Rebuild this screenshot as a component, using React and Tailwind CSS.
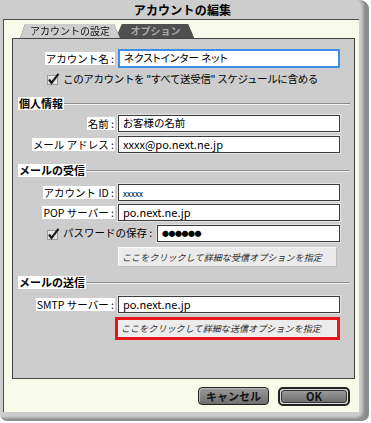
import React from "react";

const jp = "font-['Noto_Sans_CJK_JP',sans-serif]";

// right-aligned label with the white highlight behind it
const Label = ({ children }) => (
  <div className="w-[102px] flex justify-end shrink-0">
    <span className="bg-white px-[1px] leading-[13px]">{children}</span>
  </div>
);

const Field = ({ label, value, focus, jpText }) => (
  <div className="flex items-center">
    <Label>{label}</Label>
    <div
      className={`ml-[3px] w-[222px] bg-white flex items-center pl-[4px] ${
        focus
          ? "h-[19px] border-2 border-[#3d8fe6]"
          : "h-[17px] border border-[#3a3a3a] shadow-[0_0_0_1px_#e4e4e4]"
      }`}
    >
      <span
        className={`leading-none text-black ${
          jpText ? "text-[10.5px] [font-feature-settings:'palt']" : "text-[11px]"
        }`}
      >
        {value}
      </span>
    </div>
  </div>
);

const Check = () => (
  <svg width="13" height="12" viewBox="0 0 13 12" className="shrink-0">
    <rect x="0.5" y="2.5" width="10" height="9" fill="#e6e6e6" stroke="#9a9a9a" />
    <path d="M2 6.5 L4.5 10 L11.5 0.8" fill="none" stroke="#1a1a1a" strokeWidth="2.2" />
  </svg>
);

const Section = ({ title }) => (
  <div className="flex items-center pl-[5px] pr-[4px] h-[13px]">
    <span className="bg-white font-bold text-[11px] leading-[13px] px-[1px] text-black">{title}</span>
    <div className="flex-1 border-t border-[#8c8c8c] border-b border-b-[#f2f2f2]" />
  </div>
);

const OptionButton = ({ children, red }) => (
  <div className={`flex ${red ? "ml-[102px]" : "ml-[105px]"}`}>
    <div
      className={
        red
          ? "w-[225px] h-[23px] border-[3px] border-[#e8141a] bg-[#ececec] flex items-center pl-[3px]"
          : "w-[219px] h-[20px] border border-[#bdbdbd] border-t-[#f8f8f8] border-l-[#f8f8f8] bg-[#ebebeb] flex items-center pl-[3px]"
      }
    >
      <span className="italic text-[9px] whitespace-nowrap text-[#2a2a2a] leading-none tracking-[0.1px]">
        {children}
      </span>
    </div>
  </div>
);

export default function App() {
  return (
    <div className={`w-[371px] h-[423px] bg-white ${jp} text-[10.5px] text-black`}>
      <div className="w-[369px] h-[421px] bg-[#cdcdcd] rounded-tr-[9px] rounded-b-[7px] shadow-[inset_-6px_-3px_3px_rgba(0,0,0,0.32)] flex flex-col">
        {/* title bar */}
        <div className="h-[19px] flex items-center justify-center pr-[4px]">
          <span className="font-bold text-[12px] leading-none tracking-[0.2px]">アカウントの編集</span>
        </div>

        <div className="ml-[3px] w-[356px] h-[393px] border-t border-l border-[#4d4d4d] bg-[#f8fbe9] pl-[8px] pt-[4px] flex flex-col">
          {/* tabs */}
          <div className="flex h-[14px] items-end pl-[8px]">
            <div className="z-10 [filter:drop-shadow(0_0_0.6px_#333)]">
              <div className="w-[100px] h-[14px] bg-[#cdcdcd] [clip-path:polygon(5px_0,calc(100%-6px)_0,100%_100%,0_100%)] flex items-center justify-center">
                <span className="text-[10px] leading-none text-[#111]">アカウントの設定</span>
              </div>
            </div>
            <div className="-ml-[4px] [filter:drop-shadow(0_0_0.6px_#222)]">
              <div className="w-[78px] h-[14px] bg-[#4f4f4f] [clip-path:polygon(6px_0,calc(100%-6px)_0,100%_100%,0_100%)] flex items-center justify-center pl-[1px]">
                <span className="text-[10px] font-bold leading-none text-[#a9a9a9]">オプション</span>
              </div>
            </div>
          </div>

          {/* panel */}
          <div className="w-[343px] h-[341px] border border-[#444] bg-[#cdcdcd] flex flex-col">
            <div className="mt-[10px]">
              <Field label="アカウント名 :" value="ネクストインター ネット" focus jpText />
            </div>
            <div className="mt-[4px] h-[14px] flex items-center pl-[34px] gap-[3px]">
              <Check />
              <span className="leading-none tracking-[-0.35px]">
                このアカウントを "すべて送受信" スケジュールに含める
              </span>
            </div>

            <div className="mt-[11px]">
              <Section title="個人情報" />
            </div>
            <div className="mt-[5px]">
              <Field label="名前 :" value="お客様の名前" jpText />
            </div>
            <div className="mt-[4px]">
              <Field label="メール アドレス :" value="xxxx@po.next.ne.jp" />
            </div>

            <div className="mt-[11px]">
              <Section title="メールの受信" />
            </div>
            <div className="mt-[7px]">
              <Field label="アカウント ID :" value={<span className="text-[8px]">xxxxx</span>} />
            </div>
            <div className="mt-[3px]">
              <Field label="POP サーバー :" value="po.next.ne.jp" />
            </div>
            <div className="mt-[4px] flex items-center pl-[34px]">
              <Check />
              <span className="ml-[3px] w-[94px] leading-none">パスワードの保存 :</span>
              <div className="w-[183px] h-[17px] bg-white border border-[#3a3a3a] shadow-[0_0_0_1px_#e4e4e4] flex items-center pl-[4px]">
                <span className="text-[7px] leading-none tracking-[-0.5px] text-black">●●●●●●</span>
              </div>
            </div>
            <div className="mt-[5px]">
              <OptionButton>ここをクリックして詳細な受信オプションを指定</OptionButton>
            </div>

            <div className="mt-[9px]">
              <Section title="メールの送信" />
            </div>
            <div className="mt-[7px]">
              <Field label="SMTP サーバー :" value="po.next.ne.jp" />
            </div>
            <div className="mt-[4px]">
              <OptionButton red>ここをクリックして詳細な送信オプションを指定</OptionButton>
            </div>
          </div>

          {/* buttons */}
          <div className="mt-[8px] flex justify-end gap-[9px] pr-[9px]">
            <div className="w-[71px] h-[18px] rounded-[4px] border border-[#222] bg-gradient-to-b from-[#9a9a9a] to-[#6e6e6e] shadow-[inset_1px_1px_0_#b8b8b8] flex items-center justify-center">
              <span className="font-bold text-[11px] leading-none text-[#111]">キャンセル</span>
            </div>
            <div className="w-[72px] h-[19px] rounded-[5px] border-2 border-[#222] bg-[#d8d8d8] p-[1px] flex">
              <div className="flex-1 rounded-[3px] border border-[#333] bg-gradient-to-b from-[#9a9a9a] to-[#707070] flex items-center justify-center">
                <span className="font-bold text-[11px] leading-none text-[#111]">OK</span>
              </div>
            </div>
          </div>
        </div>
      </div>
    </div>
  );
}
